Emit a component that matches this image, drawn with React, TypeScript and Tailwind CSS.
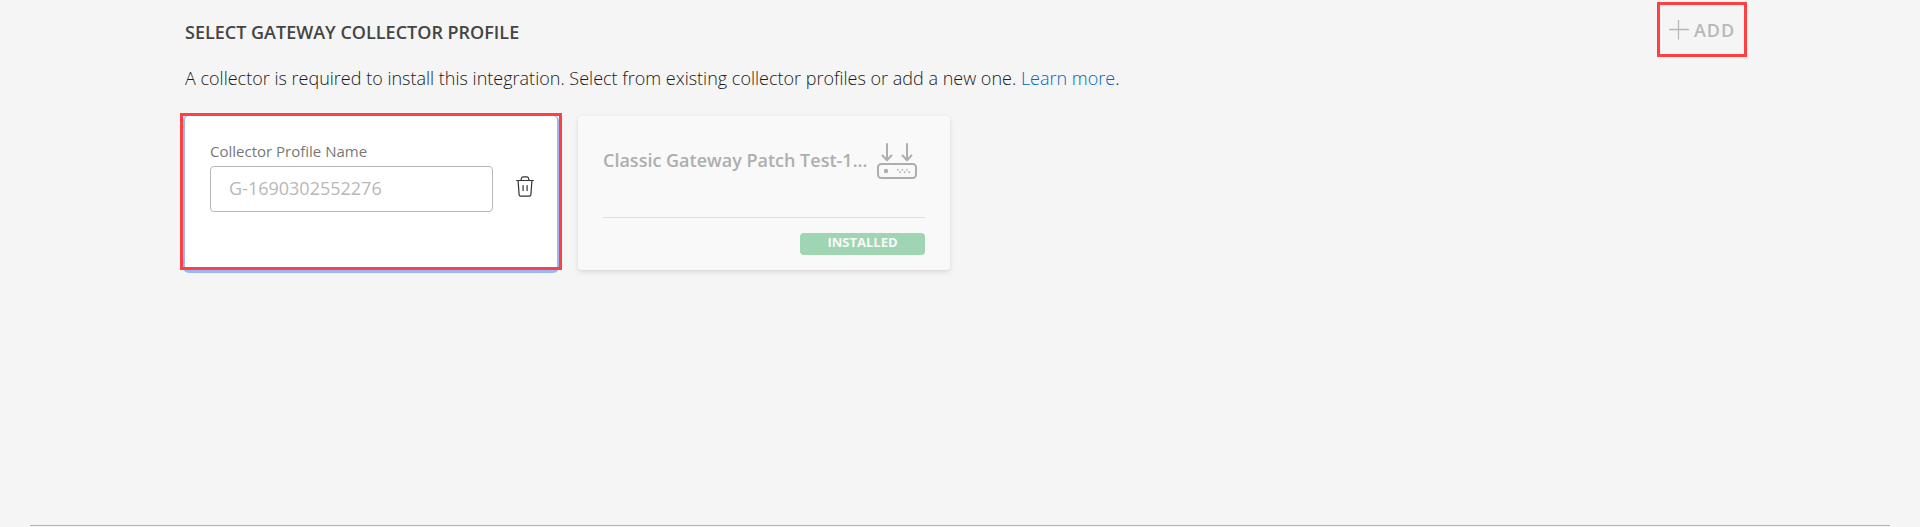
import React from "react";

function PlusIcon() {
  return (
    <svg width="20" height="20" viewBox="0 0 20 20" fill="none" stroke="currentColor" strokeWidth="1.3" strokeLinecap="round" aria-hidden="true">
      <path d="M0.5 9.5H19.5M9.5 0.5V19" />
    </svg>
  );
}

function TrashIcon() {
  return (
    <svg width="18" height="21" viewBox="0 0 18 21" fill="none" stroke="currentColor" strokeWidth="1.2" strokeLinecap="round" strokeLinejoin="round" aria-hidden="true">
      <path d="M0.7 4.5H17.3" />
      <path d="M5 4.2L5.6 1.9Q5.9 0.8 7 0.8H11Q12.1 0.8 12.4 1.9L13 4.2" />
      <path d="M2.1 4.7L3.1 18.6Q3.2 20.1 4.7 20.1H13.3Q14.8 20.1 14.9 18.6L15.9 4.7" />
      <path d="M7.1 9.6V14.6M11.1 9.6V14.6" />
    </svg>
  );
}

function GatewayIcon() {
  return (
    <svg className="shrink-0" width="40" height="37" viewBox="0 0 40 37" fill="none" stroke="currentColor" strokeWidth="2" strokeLinecap="round" strokeLinejoin="round" aria-hidden="true">
      <path d="M10 1V17M5.5 12.5L10 17.2L14.5 12.5" />
      <path d="M30 1V17M25.5 12.5L30 17.2L34.5 12.5" />
      <rect x="1" y="21" width="38" height="14" rx="3.2" />
      <circle cx="9" cy="28" r="2.2" fill="currentColor" stroke="none" />
      <g fill="currentColor" stroke="none">
        <circle cx="20.8" cy="26.8" r="0.9" />
        <circle cx="25.4" cy="26.8" r="0.9" />
        <circle cx="30" cy="26.8" r="0.9" />
        <circle cx="23.1" cy="29.2" r="0.9" />
        <circle cx="27.7" cy="29.2" r="0.9" />
        <circle cx="32.3" cy="29.2" r="0.9" />
      </g>
    </svg>
  );
}

function NewProfileCard() {
  return (
    <section className="relative flex h-[154px] w-[372px] items-start justify-between rounded bg-white pr-[23px] pl-[25px] pt-[22px] shadow-[0_1px_0_2px_#99b8f5]">
      <div className="flex flex-col gap-[2px]">
        <label htmlFor="profile-name" className="text-[15px] leading-[26px] text-[#777777]">
          Collector Profile Name
        </label>
        <input
          id="profile-name"
          type="text"
          placeholder="G-1690302552276"
          className="h-[46px] w-[283px] rounded border border-[#b8b8b8] bg-white px-[18px] pb-[3px] text-lg text-[#444444] outline-none placeholder:text-[#b8b8b8]"
        />
      </div>
      <button type="button" aria-label="Delete profile" className="mt-[38px] text-[#333333]">
        <TrashIcon />
      </button>
      <div className="pointer-events-none absolute -inset-x-[5px] -top-[3px] bottom-0 border-3 border-[#ff4042]" />
    </section>
  );
}

function InstalledCard() {
  return (
    <section className="flex h-[154px] w-[372px] flex-col rounded bg-[#f9f9f9] px-[25px] pt-[27px] shadow-[0_2px_5px_rgba(0,0,0,0.12)]">
      <div className="flex h-[75px] items-start justify-between border-b border-[#dddddd] pr-2 text-[#aeaeae]">
        <h2 className="pt-1 text-lg leading-[26px] font-semibold whitespace-nowrap">Classic Gateway Patch Test-1...</h2>
        <GatewayIcon />
      </div>
      <span className="mt-[15px] h-[22px] w-[125px] self-end rounded-sm bg-[#9fd5b3] text-center text-[13px] leading-[18px] font-bold text-[#f9f9f9]">
        INSTALLED
      </span>
    </section>
  );
}

export default function App() {
  return (
    <div className="flex min-h-screen flex-col bg-[#f5f5f5] px-[30px] pb-px font-['Open_Sans',sans-serif] text-[#444444]">
      <main className="mx-auto w-full max-w-[1550px] grow">
        <header className="flex items-start justify-between">
          <h1 className="pt-[19px] text-lg leading-[26px] font-semibold">SELECT GATEWAY COLLECTOR PROFILE</h1>
          <button
            type="button"
            className="-mr-3 mt-[2px] flex h-[55px] items-center gap-[5px] border-3 border-[#ff4042] px-[9px] text-lg font-semibold tracking-wider text-[#b8b8b8]"
          >
            <PlusIcon />
            ADD
          </button>
        </header>
        <p className="mt-2 text-lg leading-[26px] font-light text-[#1a1a1a]">
          A collector is required to install this integration. Select from existing collector profiles or add a new one.{" "}
          <a href="#learn-more" className="text-[#0066c0]">Learn more</a>.
        </p>
        <div className="mt-[25px] flex flex-wrap gap-[21px]">
          <NewProfileCard />
          <InstalledCard />
        </div>
      </main>
      <hr className="border-[#b3b3b3]" />
    </div>
  );
}
